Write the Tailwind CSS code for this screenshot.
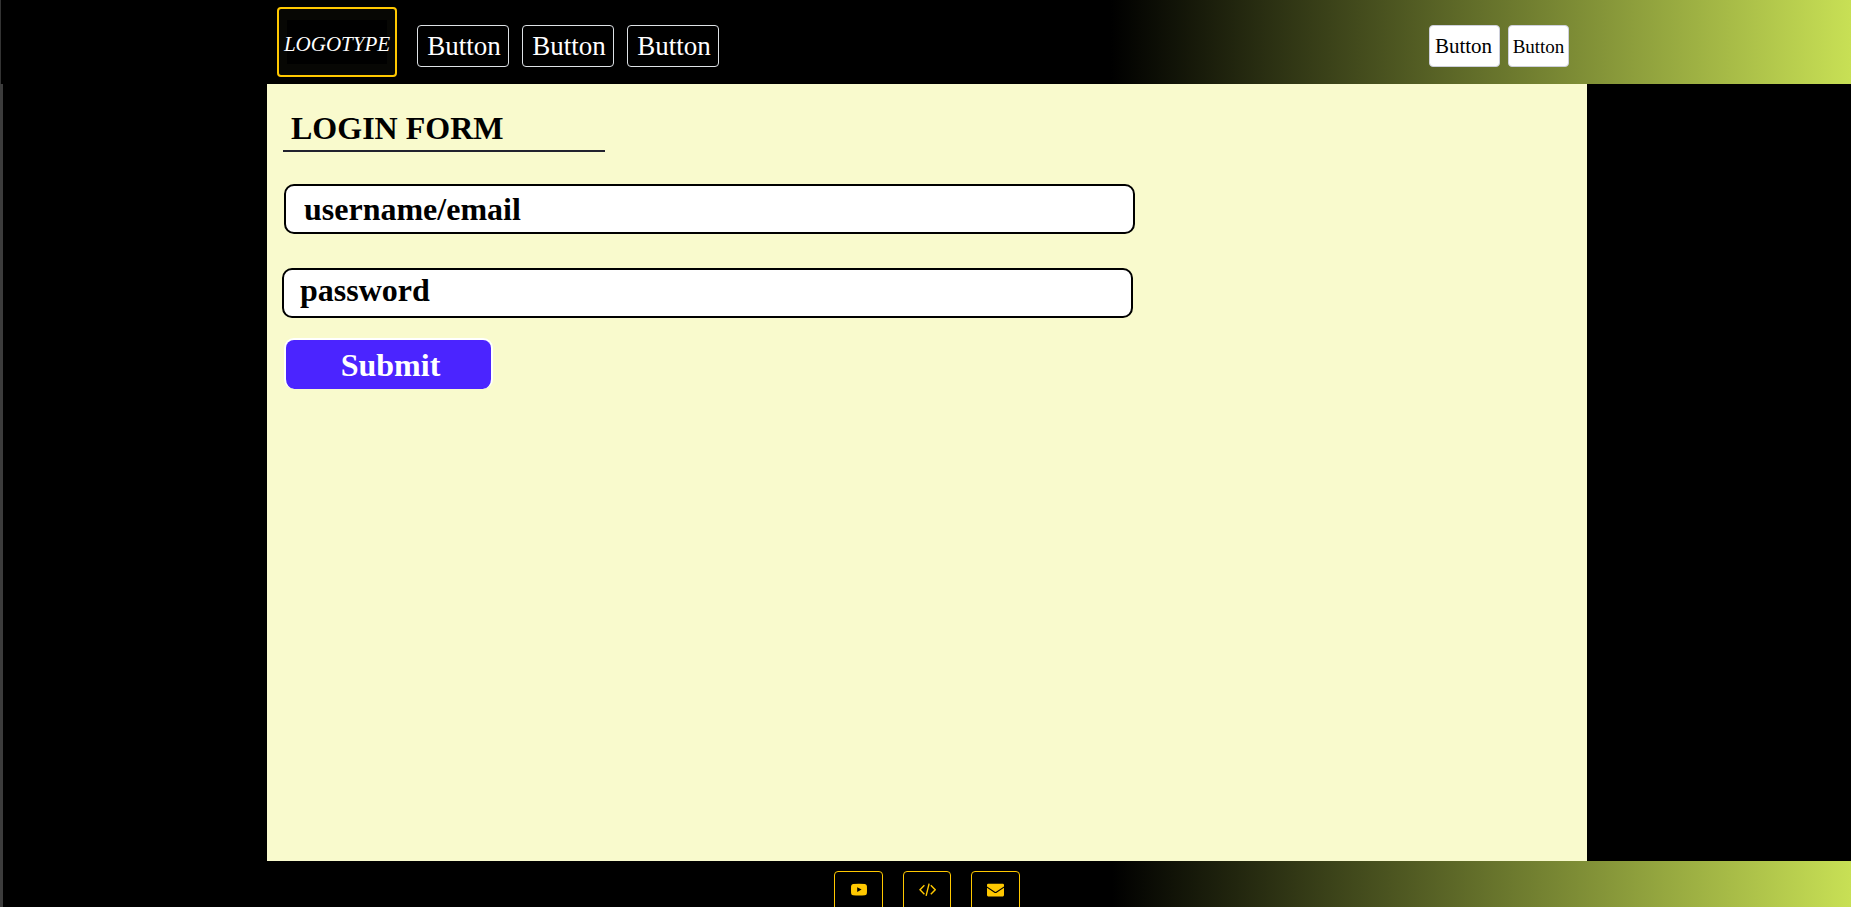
<!DOCTYPE html>
<html lang="en">
<head>
<meta charset="utf-8">
<meta name="viewport" content="width=device-width, initial-scale=1">
<title>Login form</title>
<script src="https://cdn.jsdelivr.net/npm/@tailwindcss/browser@4"></script>
</head>
<body class="flex h-screen flex-col overflow-hidden bg-black font-['Liberation_Serif',serif] text-black">
  <header class="h-[84px] shrink-0 border-l border-[#333333] bg-linear-to-r/srgb from-black from-60% to-[#c8e055] pl-[2px]">
    <div class="mx-auto flex max-w-[1320px] items-start justify-between pr-[18px] pl-[10px]">
      <div class="flex items-start pt-[7px]">
        <a href="#" class="mr-5 flex h-[70px] w-[120px] items-center justify-center rounded border-2 border-[#ffc800] bg-[#070704] text-[21px] text-white italic">
          <span class="flex h-11 w-[100px] items-center justify-center bg-black pt-[6px]">LOGOTYPE</span>
        </a>
        <nav class="flex gap-[13px] pt-[18px] text-[27px] text-white">
          <button type="button" class="flex h-[42px] w-[92px] items-center justify-center rounded border border-[#dee2e6] pl-[2px]">Button</button>
          <button type="button" class="flex h-[42px] w-[92px] items-center justify-center rounded border border-[#dee2e6] pl-[2px]">Button</button>
          <button type="button" class="flex h-[42px] w-[92px] items-center justify-center rounded border border-[#dee2e6] pl-[2px]">Button</button>
        </nav>
      </div>
      <div class="flex gap-2 pt-[25px]">
        <button type="button" class="flex h-[42px] w-[71px] items-center justify-center rounded border border-[#ced0dc] bg-white pt-[2px] pr-[2px] text-[21px]">Button</button>
        <button type="button" class="flex h-[42px] w-[61px] items-center justify-center rounded border border-[#ced0dc] bg-white pt-[2px] text-[19px]">Button</button>
      </div>
    </div>
  </header>

  <div class="flex min-h-0 flex-1 border-l-[3px] border-[#3c3c3c]">
    <main class="mx-auto w-full max-w-[1320px] bg-[#f9facd] pt-6 pl-[15px] text-[32px] font-bold">
      <h1 class="ml-px h-11 w-[322px] border-b-2 border-[#22222e] pl-2 leading-10">LOGIN FORM</h1>
      <form class="flex flex-col items-start pt-8">
        <input type="text" aria-label="Username or email" placeholder="username/email" class="ml-[2px] h-[50px] w-[851px] max-w-full rounded-[10px] border-2 border-black bg-white pl-[18px] placeholder:text-black placeholder:opacity-100">
        <input type="password" aria-label="Password" placeholder="password" class="mt-[34px] h-[50px] w-[851px] max-w-full rounded-[10px] border-2 border-black bg-white pb-[6px] pl-4 placeholder:text-black placeholder:opacity-100">
        <button type="submit" class="mt-5 ml-[2px] flex h-[51px] w-[209px] items-center justify-center rounded-[10px] border-2 border-b-0 border-white bg-[#4b24ff] pl-1 text-white">Submit</button>
      </form>
    </main>
  </div>

  <footer class="flex h-[46px] shrink-0 items-start justify-center gap-5 overflow-hidden border-l-[3px] border-[#3c3c3c] bg-linear-to-r/srgb from-black from-60% to-[#c8e055] pt-[10px] text-[#ffc800]">
    <a href="#" aria-label="Video channel" class="flex h-12 w-[49px] justify-center rounded border border-[#ffc800] pt-[10px]">
      <svg class="h-4 w-4" viewBox="0 0 16 16" fill="currentColor" aria-hidden="true"><path fill-rule="evenodd" d="M2 1.9Q8 1.5 14 1.9Q15.7 2.1 15.9 4Q16.1 7.6 15.9 11.3Q15.7 13.1 14 13.3Q8 13.7 2 13.3Q.3 13.1 .1 11.3Q-.1 7.6 .1 4Q.3 2.1 2 1.9ZM6.2 5.2V10L10.6 7.6Z"/></svg>
    </a>
    <a href="#" aria-label="Source code" class="flex h-12 w-12 justify-center rounded border border-[#ffc800] pt-[10px]">
      <svg class="h-4 w-[17px]" viewBox="0 0 17 16" fill="none" stroke="currentColor" stroke-width="1.4" aria-hidden="true"><path d="M5.4 3.2L1 7.7L5.4 12.2M11.8 3.2L16.2 7.7L11.8 12.2M10.1 1.6L7.1 13.8"/></svg>
    </a>
    <a href="#" aria-label="Email" class="flex h-12 w-[49px] justify-center rounded border border-[#ffc800] pt-[10px]">
      <svg class="h-4 w-[17px]" viewBox="0 0 17 16" fill="currentColor" aria-hidden="true"><path d="M0 3Q0 1.8 1.2 1.8H15.8Q17 1.8 17 3V4.4L9.4 9.6Q8.5 10.2 7.6 9.6L0 4.4ZM0 5.7L7 10.6Q8.5 11.6 10 10.6L17 5.7V13Q17 14.4 15.8 14.4H1.2Q0 14.4 0 13Z"/></svg>
    </a>
  </footer>
</body>
</html>
